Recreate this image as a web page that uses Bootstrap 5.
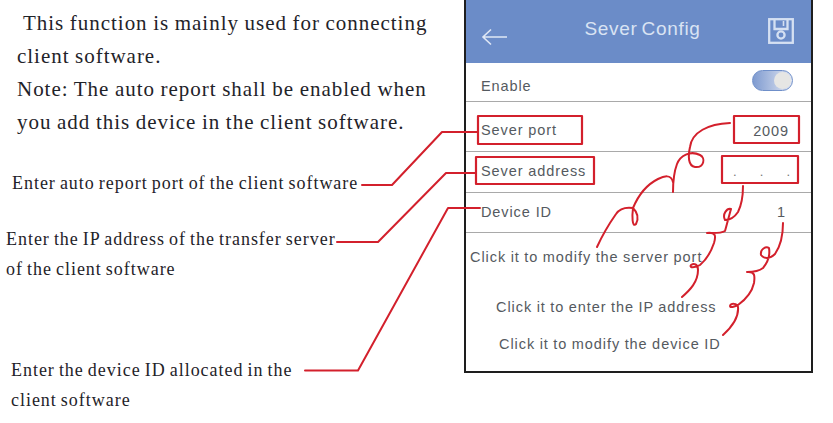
<!DOCTYPE html>
<html lang="en">
<head>
<meta charset="utf-8">
<title>Sever Config</title>
<link href="https://cdn.jsdelivr.net/npm/bootstrap@5.3.0/dist/css/bootstrap.min.css" rel="stylesheet">
<style>
html,body{margin:0;background:#fff;overflow:hidden}
.sheet{width:833px;height:423px;position:relative}
.manual{width:464px;font-family:"Liberation Serif",serif;color:#1f2329}
.intro{margin:7px 0 0 17px;font-size:21px;line-height:33px;letter-spacing:.97px;word-spacing:-.6px;white-space:nowrap}
.intro-first{padding-left:6px}
.note{font-size:18px;line-height:30px;letter-spacing:.97px;word-spacing:-1.4px;white-space:nowrap}
.note-port{margin:29px 0 0 12px}
.note-ip{margin:26px 0 0 6px}
.note-id{margin:71px 0 0 11px}
.phone{width:349px;height:373px;border:solid #1e1e1e;border-width:0 2px 2px;font-family:"Liberation Sans",sans-serif;color:#555a60;letter-spacing:.9px;font-size:14.5px}
.phone-head{height:63px;background:#6b8cc8;color:#d9e3f3;padding:0 17px 0 15px}
.phone-title{font-size:19px;letter-spacing:.7px;word-spacing:-2px;margin:-4px 0 0 10px}
.icon-back{margin-top:10px}
.icon-save{margin-top:-1px}
.phone-row{padding:0 15px;border-bottom:1px solid #a9a9a9;white-space:nowrap}
.row-enable{height:39px;padding-top:9px}
.row-port{height:50px;padding-top:9px}
.row-addr{height:41px;padding-top:0}
.row-id{height:40px;padding-top:1px}
.val-port{padding-right:7px;padding-top:2px}
.val-addr{letter-spacing:0;width:57px;margin-right:6px;padding-top:0;font-size:13px;color:#777}
.val-id{padding-right:10px}
.toggle-track{width:41px;height:21px;border:1px solid #6f8fc9;border-radius:11px;background:linear-gradient(90deg,#7f9bd0,#e1e6f2);margin-top:-12px;margin-right:3px;position:relative}
.toggle-knob{position:absolute;right:1px;top:1px;width:17px;height:17px;border-radius:50%;background:#e6e6e4}
.hint{white-space:nowrap;line-height:20px;font-size:14.5px;letter-spacing:.95px;word-spacing:-.5px}
.hint-a{margin:14px 0 0 4px}
.hint-b{margin:30px 0 0 30px}
.hint-c{margin:17px 0 0 33px}
.overlay{position:absolute;left:0;top:0;pointer-events:none}
</style>
</head>
<body>
<div class="sheet d-flex align-items-start">
  <div class="manual flex-shrink-0">
    <div class="intro">
      <div class="intro-first">This function is mainly used for connecting</div>
      <div>client software.</div>
      <div>Note: The auto report shall be enabled when</div>
      <div>you add this device in the client software.</div>
    </div>
    <div class="note note-port">Enter auto report port of the client software</div>
    <div class="note note-ip">Enter the IP address of the transfer server<br>of the client software</div>
    <div class="note note-id">Enter the device ID allocated in the<br>client software</div>
  </div>
  <div class="phone flex-shrink-0">
    <div class="phone-head d-flex justify-content-between align-items-center">
      <svg class="icon-back" width="26" height="18" viewBox="0 0 26 18" fill="none" stroke="#dfe7f5" stroke-width="1.6"><path d="M26 9H2M10 1.5 2 9l8 7.5"/></svg>
      <span class="phone-title">Sever Config</span>
      <svg class="icon-save" width="26" height="26" viewBox="0 0 26 26" fill="none" stroke="#d5e0f2" stroke-width="2.3"><rect x="1.2" y="1.2" width="23.6" height="23.6"/><path d="M6.5 1v10h13V1"/><path d="M15.5 3v5" stroke-width="1.6"/><circle cx="13" cy="17" r="3.6"/></svg>
    </div>
    <div class="phone-row row-enable d-flex justify-content-between align-items-center">
      <span>Enable</span>
      <span class="toggle-track"><span class="toggle-knob"></span></span>
    </div>
    <div class="phone-row row-port d-flex justify-content-between align-items-center">
      <span>Sever port</span><span class="val-port">2009</span>
    </div>
    <div class="phone-row row-addr d-flex justify-content-between align-items-center">
      <span>Sever address</span><span class="val-addr d-flex justify-content-between"><span>.</span><span>.</span><span>.</span></span>
    </div>
    <div class="phone-row row-id d-flex justify-content-between align-items-center">
      <span>Device ID</span><span class="val-id">1</span>
    </div>
    <div class="hint hint-a">Click it to modify the server port</div>
    <div class="hint hint-b">Click it to enter the IP address</div>
    <div class="hint hint-c">Click it to modify the device ID</div>
  </div>
  <svg class="overlay" width="833" height="423" viewBox="0 0 833 423" fill="none" stroke="#d3202c" stroke-width="2" stroke-linejoin="round" stroke-linecap="round">
    <g stroke-width="2.2">
      <rect x="478" y="116" width="104" height="28"/>
      <rect x="476" y="157" width="118" height="27"/>
      <rect x="734" y="116" width="65" height="27"/>
      <rect x="722" y="156" width="76" height="27"/>
    </g>
    <path d="M362 185H392L442 132H477"/>
    <path d="M337 242H378L446 173H476"/>
    <path d="M305 370.5H358L448 208H480"/>
    <path d="M730 123C708 124 692 132 690 147C688 156 688 166 695 167C704 168 706 158 700 155C690 150 680 156 677 164C674 172 673 182 673 192"/>
    <path d="M673 182C671 174 664 176 658 179C646 185 638 196 633 208C637 212 639 218 636 224C632 228 632 216 633 208C626 207 620 208 616 214C609 224 602 236 597 247"/>
    <path d="M743 186C743 196 742 204 738 212C734 218 729 220 725 220C722 214 727 208 731 209C729 216 727 224 725 231C720 234 712 233 707 233C716 232 716 236 714 243C711 252 706 260 700 265C695 268 689 268 691 265C694 263 698 264 698 270C698 282 690 290 682 297"/>
    <path d="M783 223C783 234 782 244 775 254C770 259 764 259 761 255C760 249 766 246 769 248C770 254 768 262 763 268C758 272 752 272 747 272C755 271 755 276 754 283C752 292 745 300 738 305C734 307 730 308 730 306C731 303 737 303 738 307C739 317 733 326 723 335"/>
  </svg>
</div>
</body>
</html>
